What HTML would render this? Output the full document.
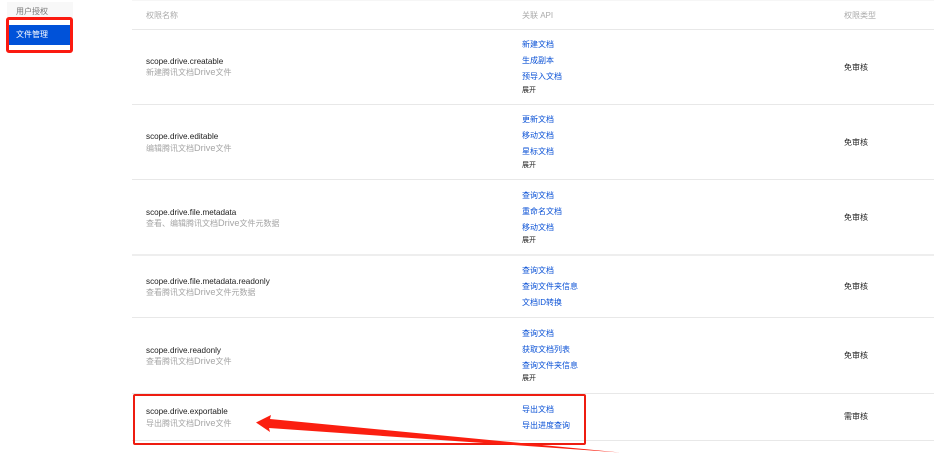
<!DOCTYPE html>
<html><head><meta charset="utf-8">
<style>
html,body{margin:0;padding:0;background:#fff;}
body{position:relative;width:934px;height:459px;overflow:hidden;font-family:"Liberation Sans","Noto Sans CJK SC",sans-serif;font-size:8px;line-height:12px;color:#222;}
.t{position:absolute;white-space:nowrap;filter:blur(.25px);}
.h{color:#aaa;}
.g{color:#a5a5a5;}
.g i{font-style:normal;font-size:9.2px;}
.b{color:#0b52d6;}
.k{color:#222;}
.s{font-size:8.15px;}
.l{position:absolute;left:132px;right:0;height:1px;background:#e8e8e8;}
</style></head><body>
<div style="position:absolute;left:7px;top:2px;width:66px;height:16px;background:#f8f8f8"></div>
<div style="position:absolute;left:7px;top:25px;width:66px;height:20px;background:#0052d9"></div>
<div class="t" style="left:16px;top:6px;color:#777">用户授权</div>
<div class="t" style="left:16px;top:29px;color:#fff">文件管理</div>
<div style="position:absolute;left:6px;top:17px;width:67px;height:36px;box-sizing:border-box;border:3px solid #fb1a10;border-radius:3px;"></div>

<div style="position:absolute;left:132px;right:0;top:0;height:1px;background:#f6f6f6"></div>
<div class="l" style="top:29px"></div>
<div class="l" style="top:104px"></div>
<div class="l" style="top:179px"></div>
<div class="l" style="top:254px;height:2px;background:#eee"></div>
<div class="l" style="top:317px"></div>
<div class="l" style="top:393px"></div>
<div class="l" style="top:440px"></div>

<div class="t h" style="left:146px;top:10px">权限名称</div>
<div class="t h" style="left:522px;top:10px">关联 API</div>
<div class="t h" style="left:844px;top:10px">权限类型</div>

<div class="t k s" style="left:146px;top:56px">scope.drive.creatable</div>
<div class="t g" style="left:146px;top:66px">新建腾讯文档<i>Drive</i>文件</div>
<div class="t b" style="left:522px;top:39px">新建文档</div>
<div class="t b" style="left:522px;top:55px">生成副本</div>
<div class="t b" style="left:522px;top:71px">预导入文档</div>
<div class="t k" style="left:522px;top:85px;font-size:7px">展开</div>
<div class="t k" style="left:844px;top:62px">免审核</div>

<div class="t k s" style="left:146px;top:131px">scope.drive.editable</div>
<div class="t g" style="left:146px;top:142px">编辑腾讯文档<i>Drive</i>文件</div>
<div class="t b" style="left:522px;top:114px">更新文档</div>
<div class="t b" style="left:522px;top:130px">移动文档</div>
<div class="t b" style="left:522px;top:146px">星标文档</div>
<div class="t k" style="left:522px;top:160px;font-size:7px">展开</div>
<div class="t k" style="left:844px;top:137px">免审核</div>

<div class="t k s" style="left:146px;top:207px">scope.drive.file.metadata</div>
<div class="t g" style="left:146px;top:217px">查看、编辑腾讯文档<i>Drive</i>文件元数据</div>
<div class="t b" style="left:522px;top:190px">查询文档</div>
<div class="t b" style="left:522px;top:206px">重命名文档</div>
<div class="t b" style="left:522px;top:222px">移动文档</div>
<div class="t k" style="left:522px;top:235px;font-size:7px">展开</div>
<div class="t k" style="left:844px;top:212px">免审核</div>

<div class="t k s" style="left:146px;top:276px">scope.drive.file.metadata.readonly</div>
<div class="t g" style="left:146px;top:286px">查看腾讯文档<i>Drive</i>文件元数据</div>
<div class="t b" style="left:522px;top:265px">查询文档</div>
<div class="t b" style="left:522px;top:281px">查询文件夹信息</div>
<div class="t b" style="left:522px;top:297px">文档ID转换</div>
<div class="t k" style="left:844px;top:281px">免审核</div>

<div class="t k s" style="left:146px;top:345px">scope.drive.readonly</div>
<div class="t g" style="left:146px;top:355px">查看腾讯文档<i>Drive</i>文件</div>
<div class="t b" style="left:522px;top:328px">查询文档</div>
<div class="t b" style="left:522px;top:344px">获取文档列表</div>
<div class="t b" style="left:522px;top:360px">查询文件夹信息</div>
<div class="t k" style="left:522px;top:373px;font-size:7px">展开</div>
<div class="t k" style="left:844px;top:350px">免审核</div>

<div class="t k s" style="left:146px;top:406px">scope.drive.exportable</div>
<div class="t g" style="left:146px;top:417px">导出腾讯文档<i>Drive</i>文件</div>
<div class="t b" style="left:522px;top:404px">导出文档</div>
<div class="t b" style="left:522px;top:420px">导出进度查询</div>
<div class="t k" style="left:844px;top:411px">需审核</div>

<div style="position:absolute;left:133px;top:394px;width:453px;height:51px;box-sizing:border-box;border:2px solid #ee1c10;border-radius:2px;"></div>
<svg style="position:absolute;left:0;top:0" width="934" height="459" viewBox="0 0 934 459">
<path d="M256 422.500 L271 415 L270 419 L620 452.500 L269 428 L270 432 Z" fill="#fb1f10"/>
</svg>
</body></html>
